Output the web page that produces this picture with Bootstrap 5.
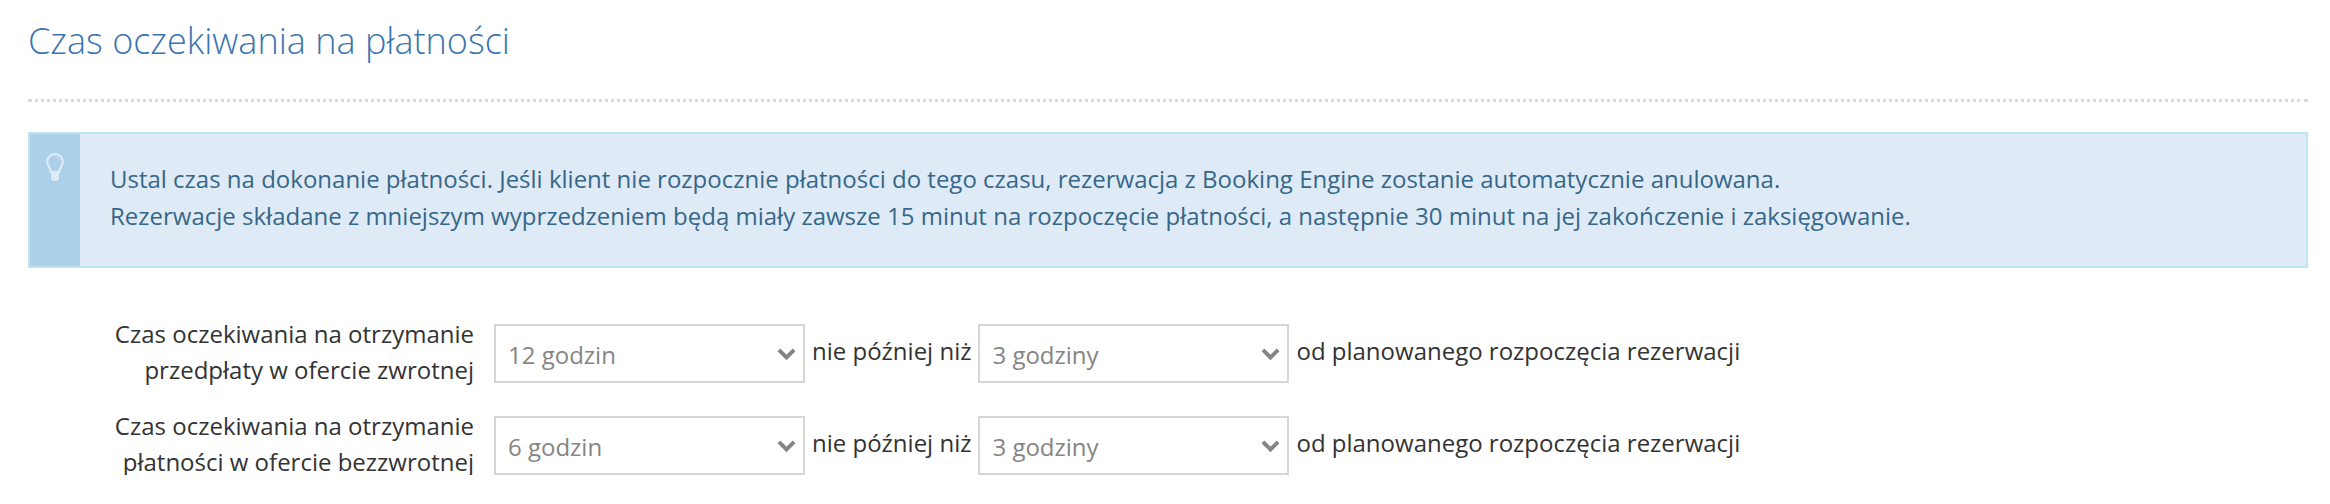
<!DOCTYPE html>
<html lang="pl">
<head>
  <meta charset="UTF-8">
  <meta name="viewport" content="width=device-width, initial-scale=1.0">
  <title>Czas oczekiwania na płatności</title>
  <link href="https://cdn.jsdelivr.net/npm/bootstrap@5.3.0/dist/css/bootstrap.min.css" rel="stylesheet">
  <style>
    body {
      font-family: "Open Sans", "Liberation Sans", sans-serif;
      font-size: 24px;
      color: #333;
      background: #fff;
    }
    .page-wrap {
      padding: 16px 22px 0 28px;
    }
    .page-title {
      font-size: 36px;
      font-weight: 300;
      line-height: 50px;
      color: #3a75b0;
      margin: 0;
      padding-bottom: 33px;
      border-bottom: 3px dotted #dcdcdc;
    }
    .hint-box {
      margin-top: 30px;
      height: 136px;
      background: #deebf7;
      border: 2px solid #bfe6ef;
    }
    .hint-icon {
      width: 50px;
      background: #acd0e8;
      padding-top: 19px;
    }
    .hint-text {
      padding-left: 30px;
      padding-bottom: 6px;
      color: #376788;
      line-height: 37px;
    }
    .pay-rows {
      margin-top: 56px;
      gap: 33px;
    }
    .pay-label {
      width: 446px;
      text-align: right;
      line-height: 36px;
      margin-top: -10px;
      margin-bottom: -7px;
    }
    .pay-select {
      height: 59px;
      border: 2px solid #d6d6d6;
      border-radius: 0;
      color: #858585;
      font-size: 24px;
      padding: 6px 40px 4px 12px;
      background-image: url("data:image/svg+xml,%3csvg xmlns='http://www.w3.org/2000/svg' viewBox='0 0 16 12'%3e%3cpath fill='none' stroke='%23858585' stroke-width='3.4' d='M1.5 2.5 8 9l6.500-6.500'/%3e%3c/svg%3e");
      background-size: 19px 14px;
      background-position: right 7px center;
    }
    .pay-select.wide { width: 311px; }
    .pay-select.first { margin-left: 20px; }
    .pay-word {
      margin: -6px 7px 0;
      white-space: nowrap;
    }
  </style>
</head>
<body>
  <div class="page-wrap">
    <h2 class="page-title">Czas oczekiwania na płatności</h2>

    <div class="hint-box d-flex">
      <div class="hint-icon d-flex justify-content-center flex-shrink-0">
        <svg width="18" height="28" viewBox="0 0 18 28">
          <path d="M9 1.200C4.500 1.200 1.200 4.500 1.200 8.600c0 3.800 3.300 6.500 3.800 10.400h8c.5-3.900 3.800-6.600 3.800-10.400C16.800 4.500 13.500 1.200 9 1.200Z" fill="none" stroke="#dcebf6" stroke-width="2.200"/>
          <path d="M5 18.500h8v6.500a4 3 0 0 1-8 0Z" fill="#dcebf6"/>
          <path d="M10.500 4.500c1.500.4 2.500 1.500 2.900 3" fill="none" stroke="#dcebf6" stroke-width="1"/>
        </svg>
      </div>
      <div class="hint-text d-flex flex-column justify-content-center">
        <div>Ustal czas na dokonanie płatności. Jeśli klient nie rozpocznie płatności do tego czasu, rezerwacja z Booking Engine zostanie automatycznie anulowana.</div>
        <div>Rezerwacje składane z mniejszym wyprzedzeniem będą miały zawsze 15 minut na rozpoczęcie płatności, a następnie 30 minut na jej zakończenie i zaksięgowanie.</div>
      </div>
    </div>

    <div class="pay-rows d-flex flex-column">
      <div class="d-flex align-items-center">
        <div class="pay-label">Czas oczekiwania na otrzymanie<br>przedpłaty w ofercie zwrotnej</div>
        <select class="form-select pay-select wide first"><option>12 godzin</option></select>
        <span class="pay-word">nie później niż</span>
        <select class="form-select pay-select wide"><option>3 godziny</option></select>
        <span class="pay-word">od planowanego rozpoczęcia rezerwacji</span>
      </div>
      <div class="d-flex align-items-center">
        <div class="pay-label">Czas oczekiwania na otrzymanie<br>płatności w ofercie bezzwrotnej</div>
        <select class="form-select pay-select wide first"><option>6 godzin</option></select>
        <span class="pay-word">nie później niż</span>
        <select class="form-select pay-select wide"><option>3 godziny</option></select>
        <span class="pay-word">od planowanego rozpoczęcia rezerwacji</span>
      </div>
    </div>
  </div>
  <script src="https://cdn.jsdelivr.net/npm/bootstrap@5.3.0/dist/js/bootstrap.bundle.min.js"></script>
</body>
</html>
